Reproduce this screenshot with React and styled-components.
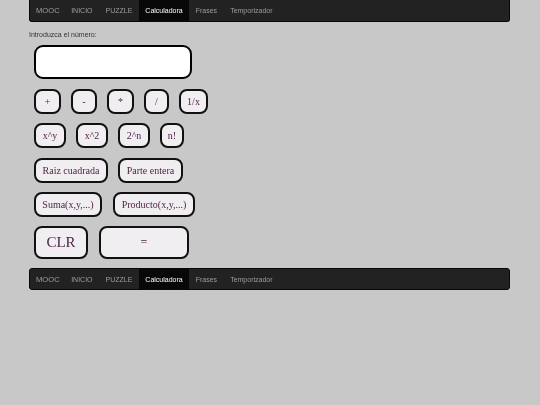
import React from "react";
import styled, { createGlobalStyle } from "styled-components";

const Global = createGlobalStyle`
  html, body { margin: 0; padding: 0; background: #c8c8c8; }
  body { font-family: "Liberation Sans", Arial, sans-serif; -webkit-font-smoothing: antialiased; }
`;

const Page = styled.div`
  padding-left: 29px;
  width: 481px;
  will-change: transform;
`;

const Nav = styled.nav`
  display: flex;
  align-items: stretch;
  height: 22px;
  background: #222;
  border: 1px solid #080808;
  box-sizing: border-box;
  border-radius: ${(p) => (p.$top ? "0 0 3px 3px" : "3px")};
  border-top-width: ${(p) => (p.$top ? "0" : "1px")};
  margin-top: ${(p) => (p.$top ? "0" : "9px")};
  overflow: hidden;
`;

const NavItem = styled.span`
  display: flex;
  align-items: center;
  padding: 0 6.5px;
  font-size: 7px;
  color: ${(p) => (p.$active ? "#fff" : "#9d9d9d")};
  background: ${(p) => (p.$active ? "#080808" : "transparent")};
  white-space: nowrap;
`;

const Brand = styled(NavItem)`
  padding: 0 5px 0 6px;
  font-size: 7.6px;
`;

const Label = styled.div`
  margin-top: 9px;
  font-size: 7px;
  line-height: 8px;
  color: #333;
`;

const Display = styled.div`
  margin: 6px 0 0 5px;
  width: 158px;
  height: 34px;
  box-sizing: border-box;
  background: #fff;
  border: 2px solid #000;
  border-radius: 9px;
`;

const Row = styled.div`
  display: flex;
  gap: ${(p) => p.$gap || 10}px;
  margin-left: 5px;
  margin-top: ${(p) => p.$mt || 9}px;
`;

const Key = styled.button`
  width: ${(p) => p.$w}px;
  height: ${(p) => p.$h || 25}px;
  box-sizing: border-box;
  padding: 0;
  display: flex;
  align-items: center;
  justify-content: center;
  background: #f0eef0;
  border: 2px solid #111;
  border-radius: 8px;
  font-family: "Liberation Serif", "Times New Roman", serif;
  font-size: ${(p) => p.$fs || 10}px;
  color: #4a1f44;
  white-space: nowrap;
`;

const Bar = ({ top }) => (
  <Nav $top={top}>
    <Brand>MOOC</Brand>
    <NavItem>INICIO</NavItem>
    <NavItem>PUZZLE</NavItem>
    <NavItem $active>Calculadora</NavItem>
    <NavItem>Frases</NavItem>
    <NavItem>Temporizador</NavItem>
  </Nav>
);

export default function App() {
  return (
    <Page>
      <Global />
      <Bar top />
      <Label>Introduzca el número:</Label>
      <Display />
      <Row $mt={10}>
        <Key $w={27}>+</Key>
        <Key $w={26}>-</Key>
        <Key $w={27}>*</Key>
        <Key $w={25}>/</Key>
        <Key $w={29}>1/x</Key>
      </Row>
      <Row>
        <Key $w={32}>x^y</Key>
        <Key $w={32}>x^2</Key>
        <Key $w={32}>2^n</Key>
        <Key $w={24}>n!</Key>
      </Row>
      <Row $mt={10}>
        <Key $w={74}>Raiz cuadrada</Key>
        <Key $w={65}>Parte entera</Key>
      </Row>
      <Row $gap={11}>
        <Key $w={68}>Suma(x,y,...)</Key>
        <Key $w={82}>Producto(x,y,...)</Key>
      </Row>
      <Row $gap={11}>
        <Key $w={54} $h={33} $fs={15}>CLR</Key>
        <Key $w={90} $h={33} $fs={12}>=</Key>
      </Row>
      <Bar />
    </Page>
  );
}
